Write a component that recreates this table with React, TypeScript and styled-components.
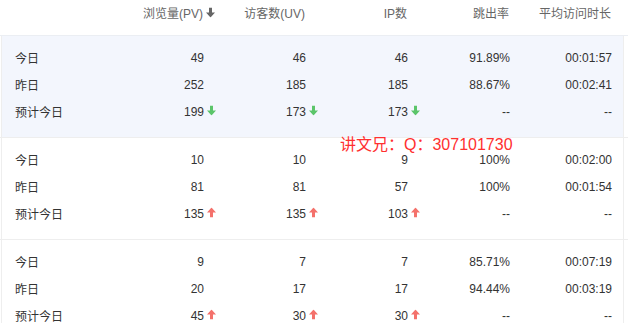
import styled, { createGlobalStyle } from 'styled-components';

const GlobalStyle = createGlobalStyle`
  html, body {
    margin: 0;
    padding: 0;
    background: #fff;
  }
  body {
    font-family: "Liberation Sans", "Noto Sans CJK SC", sans-serif;
    font-size: 12px;
  }
`;

const Page = styled.div`
  position: relative;
  width: 628px;
  height: 323px;
  overflow: hidden;
`;

const Grid = styled.div`
  display: grid;
  grid-template-columns: 87px repeat(5, 102px);
  padding: 0 12px 0 14px;
`;

const HeaderRow = styled(Grid)`
  height: 35px;
  border-bottom: 1px solid #ebeef3;
  color: #666;
  line-height: 16px;
  padding-top: 6px;
  box-sizing: border-box;
  height: 36px;
`;

const HeadCell = styled.div`
  position: relative;
  text-align: right;
  white-space: nowrap;
`;

const GroupWrap = styled.div`
  border-bottom: 1px solid #eeeeee;
`;

const Group = styled.div<{ $active?: boolean }>`
  margin: 0 4px 0 1px;
  border-left: 1px solid #eeeeee;
  border-right: 1px solid #eeeeee;
  background: ${(p) => (p.$active ? '#f3f6fd' : '#fff')};
  padding: 8px 0 12px;
  height: 101px;
  box-sizing: border-box;
`;

const Row = styled(Grid)`
  height: 27px;
  align-items: center;
  color: #333;
  padding-left: 13px;
`;

const Label = styled.div`
  text-align: left;
  white-space: nowrap;
`;

const Cell = styled.div`
  text-align: right;
  white-space: nowrap;
`;

const Num = styled.span`
  position: relative;
  display: inline-block;
`;

const Arrow = styled.svg`
  position: absolute;
  left: 100%;
  margin-left: 3px;
  top: 50%;
  transform: translateY(-65%);
  width: 9px;
  height: 10px;
`;

const Watermark = styled.div`
  position: absolute;
  left: 340px;
  top: 135px;
  color: #ff3030;
  font-size: 16px;
  line-height: 20px;
  font-family: "Liberation Sans", "Noto Sans CJK SC", sans-serif;
  white-space: nowrap;
`;

type Trend = 'up' | 'down' | 'sort';

const TrendArrow = ({ dir }: { dir: Trend }) => {
  const color = dir === 'up' ? '#f4716b' : dir === 'down' ? '#5bc56a' : '#666';
  const d = dir === 'up' ? 'M3 10h3V5h3L4.5 0 0 5h3z' : 'M3 0h3v5h3l-4.5 5L0 5h3z';
  return (
    <Arrow viewBox="0 0 9 10">
      <path d={d} fill={color} />
    </Arrow>
  );
};

type Value = { v: string; t?: Trend };
type RowData = { label: string; cells: Value[] };

const groups: RowData[][] = [
  [
    { label: '今日', cells: [{ v: '49' }, { v: '46' }, { v: '46' }, { v: '91.89%' }, { v: '00:01:57' }] },
    { label: '昨日', cells: [{ v: '252' }, { v: '185' }, { v: '185' }, { v: '88.67%' }, { v: '00:02:41' }] },
    {
      label: '预计今日',
      cells: [{ v: '199', t: 'down' }, { v: '173', t: 'down' }, { v: '173', t: 'down' }, { v: '--' }, { v: '--' }],
    },
  ],
  [
    { label: '今日', cells: [{ v: '10' }, { v: '10' }, { v: '9' }, { v: '100%' }, { v: '00:02:00' }] },
    { label: '昨日', cells: [{ v: '81' }, { v: '81' }, { v: '57' }, { v: '100%' }, { v: '00:01:54' }] },
    {
      label: '预计今日',
      cells: [{ v: '135', t: 'up' }, { v: '135', t: 'up' }, { v: '103', t: 'up' }, { v: '--' }, { v: '--' }],
    },
  ],
  [
    { label: '今日', cells: [{ v: '9' }, { v: '7' }, { v: '7' }, { v: '85.71%' }, { v: '00:07:19' }] },
    { label: '昨日', cells: [{ v: '20' }, { v: '17' }, { v: '17' }, { v: '94.44%' }, { v: '00:03:19' }] },
    {
      label: '预计今日',
      cells: [{ v: '45', t: 'up' }, { v: '30', t: 'up' }, { v: '30', t: 'up' }, { v: '--' }, { v: '--' }],
    },
  ],
];

const App = () => {
  return (
    <>
      <GlobalStyle />
      <Page>
        <HeaderRow>
          <HeadCell />
          <HeadCell>
            <Num>
              浏览量(PV)
              <TrendArrow dir="sort" />
            </Num>
          </HeadCell>
          <HeadCell>访客数(UV)</HeadCell>
          <HeadCell>IP数</HeadCell>
          <HeadCell>跳出率</HeadCell>
          <HeadCell>平均访问时长</HeadCell>
        </HeaderRow>
        {groups.map((rows, gi) => (
          <GroupWrap key={gi}>
            <Group $active={gi === 0}>
              {rows.map((r) => (
                <Row key={r.label}>
                  <Label>{r.label}</Label>
                  {r.cells.map((c, ci) => (
                    <Cell key={ci}>
                      <Num>
                        {c.v}
                        {c.t && <TrendArrow dir={c.t} />}
                      </Num>
                    </Cell>
                  ))}
                </Row>
              ))}
            </Group>
          </GroupWrap>
        ))}
        <Watermark>讲文兄：Q：307101730</Watermark>
      </Page>
    </>
  );
};

export default App;
